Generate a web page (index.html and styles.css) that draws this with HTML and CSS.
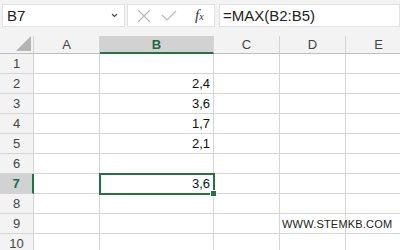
FILE: index.html
```html
<!DOCTYPE html>
<html lang="en">
<head>
    <meta charset="UTF-8">
    <title>MAX formula</title>
    <link rel="stylesheet" href="styles.css">
</head>
<body>
    <div class="toolbar">
        <div class="name-box">
            <span>B7</span>
            <svg class="chevron" width="7" height="5" viewBox="0 0 7 5"><path d="M1 1l2.5 2.5L6 1" fill="none" stroke="#444" stroke-width="1.1"/></svg>
        </div>
        <div class="fx-buttons">
            <svg width="14" height="14" viewBox="0 0 14 14"><path d="M1 1l12 12M13 1L1 13" stroke="#b8b8b8" stroke-width="1.1"/></svg>
            <svg width="16" height="12" viewBox="0 0 16 12"><path d="M1 5l5 5L15 1" fill="none" stroke="#b8b8b8" stroke-width="1.1"/></svg>
            <span class="fx">f<sub>x</sub></span>
        </div>
        <div class="formula">=MAX(B2:B5)</div>
    </div>
    <div class="sheet">
        <div class="grid">
            <div class="corner"><span class="tri"></span></div>
            <div class="col-head">A</div>
            <div class="col-head active">B</div>
            <div class="col-head">C</div>
            <div class="col-head">D</div>
            <div class="col-head">E</div>

            <div class="row-head">1</div><div class="cell"></div><div class="cell"></div><div class="cell"></div><div class="cell"></div><div class="cell"></div>
            <div class="row-head">2</div><div class="cell"></div><div class="cell num">2,4</div><div class="cell"></div><div class="cell"></div><div class="cell"></div>
            <div class="row-head">3</div><div class="cell"></div><div class="cell num">3,6</div><div class="cell"></div><div class="cell"></div><div class="cell"></div>
            <div class="row-head">4</div><div class="cell"></div><div class="cell num">1,7</div><div class="cell"></div><div class="cell"></div><div class="cell"></div>
            <div class="row-head">5</div><div class="cell"></div><div class="cell num">2,1</div><div class="cell"></div><div class="cell"></div><div class="cell"></div>
            <div class="row-head">6</div><div class="cell"></div><div class="cell"></div><div class="cell"></div><div class="cell"></div><div class="cell"></div>
            <div class="row-head active">7</div><div class="cell"></div><div class="cell num">3,6</div><div class="cell"></div><div class="cell"></div><div class="cell"></div>
            <div class="row-head">8</div><div class="cell"></div><div class="cell"></div><div class="cell"></div><div class="cell"></div><div class="cell"></div>
            <div class="row-head">9</div><div class="cell"></div><div class="cell"></div><div class="cell"></div><div class="cell"></div><div class="cell"></div>
            <div class="row-head">10</div><div class="cell"></div><div class="cell"></div><div class="cell"></div><div class="cell"></div><div class="cell"></div>
        </div>
        <div class="selection"><span class="handle"></span></div>
        <div class="watermark">WWW.STEMKB.COM</div>
    </div>
</body>
</html>
```

FILE: styles.css
```css
body {
    margin: 0;
    width: 400px;
    height: 250px;
    overflow: hidden;
    background: #fff;
    font-family: "Liberation Sans", Arial, sans-serif;
}
.toolbar {
    display: flex;
    gap: 2px;
    height: 36px;
    padding: 4px 0 0 2px;
    box-sizing: border-box;
    background: #f3f3f3;
}
.name-box,
.fx-buttons,
.formula {
    height: 23px;
    box-sizing: border-box;
    background: #fff;
    border: 1px solid #e1e1e1;
    display: flex;
    align-items: center;
}
.name-box {
    width: 123px;
    padding: 0 4px 0 4px;
    justify-content: space-between;
    font-size: 15px;
    color: #222;
}
.chevron {
    margin-right: 2px;
}
.fx-buttons {
    width: 88px;
    padding-left: 9px;
    gap: 10px;
}
.fx {
    font-family: "Liberation Serif", serif;
    font-style: italic;
    font-size: 15px;
    color: #333;
    margin-left: 8px;
}
.fx sub {
    font-size: 10px;
    vertical-align: 0;
}
.formula {
    flex: 1;
    margin-left: 2px;
    padding-left: 3px;
    font-size: 15px;
    color: #222;
}
.sheet {
    position: relative;
}
.grid {
    display: grid;
    grid-template-columns: 34px 66px 114px 66px 66px 66px;
    grid-template-rows: 18px repeat(10, 20px);
}
.corner,
.col-head,
.row-head,
.cell {
    box-sizing: border-box;
    border-right: 1px solid #d4d4d4;
    border-bottom: 1px solid #d4d4d4;
}
.corner {
    background: #f3f3f3;
    border-bottom-color: #bdbdbd;
    position: relative;
}
.tri {
    position: absolute;
    right: 2px;
    bottom: 2px;
    width: 0;
    height: 0;
    border-left: 15px solid transparent;
    border-bottom: 15px solid #b4b4b4;
}
.col-head {
    background: #f3f3f3;
    border-bottom-color: #bdbdbd;
    font-size: 13px;
    color: #444;
    display: flex;
    align-items: center;
    justify-content: center;
}
.col-head.active {
    background: #d2d2d2;
    border-bottom: 2px solid #217346;
    color: #1e6b41;
    font-weight: bold;
}
.row-head {
    background: #f3f3f3;
    font-size: 13px;
    color: #444;
    display: flex;
    align-items: center;
    justify-content: center;
}
.row-head.active {
    background: #d2d2d2;
    border-right: 2px solid #217346;
    color: #1e6b41;
    font-weight: bold;
}
.cell {
    font-size: 13px;
    color: #111;
    display: flex;
    align-items: center;
    justify-content: flex-end;
    padding-right: 3px;
}
.selection {
    position: absolute;
    left: 99px;
    top: 137px;
    width: 116px;
    height: 22px;
    box-sizing: border-box;
    border: 2px solid #217346;
}
.handle {
    position: absolute;
    right: -4px;
    bottom: -4px;
    width: 5px;
    height: 5px;
    background: #217346;
    border: 1px solid #fff;
}
.watermark {
    position: absolute;
    left: 282px;
    top: 182px;
    font-size: 11px;
    letter-spacing: 0.2px;
    color: #222;
}
```
